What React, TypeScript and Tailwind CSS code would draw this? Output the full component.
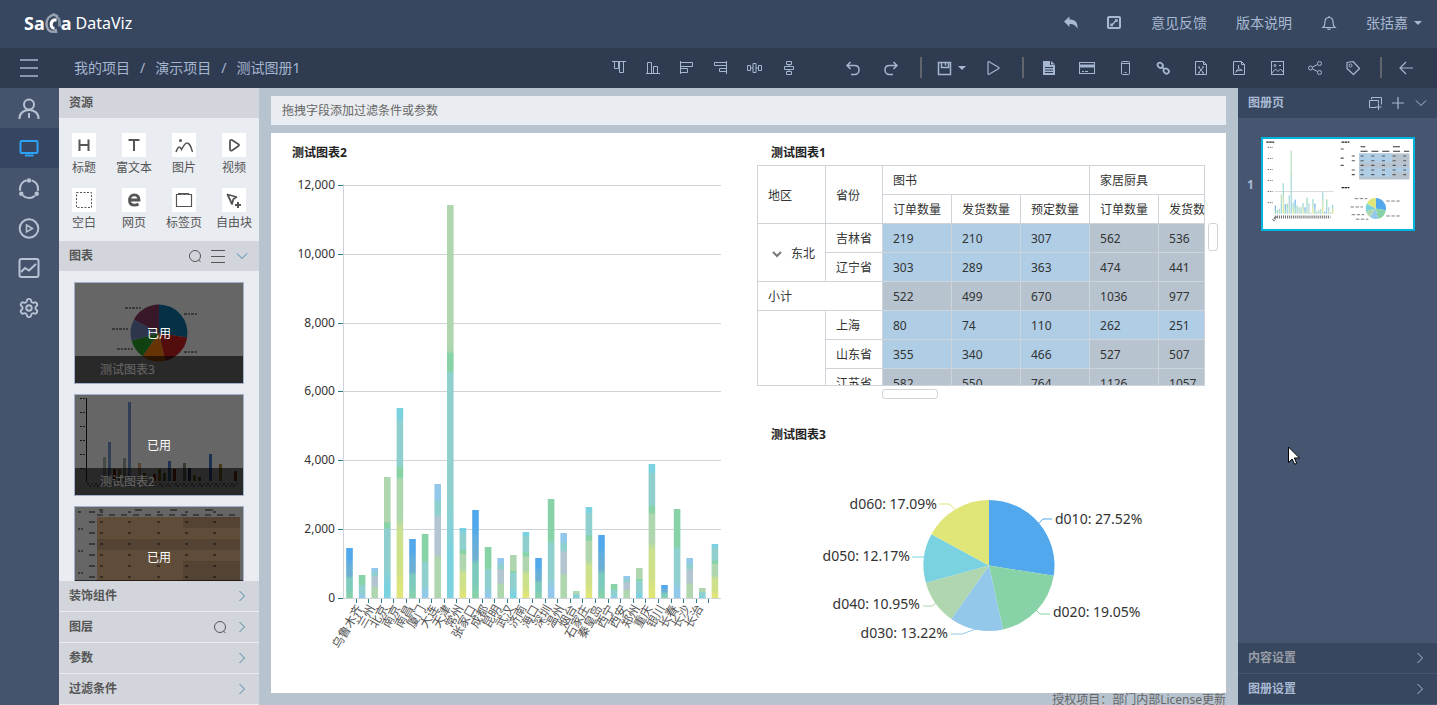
import { ReactNode } from "react";
import clsx from "clsx";
import { Settings } from "lucide-react";

const C = {
  blue: "#52a8ec",
  green: "#87d2a6",
  sky: "#93c8ea",
  sage: "#afd6ae",
  cyan: "#7ad1e0",
  lime: "#dfe577",
  teal: "#8fd0cf",
  steel: "#b3c5d0",
};

// top pixel of every bar, the base line is at 598
const barTops = [
  548, 575, 568, 477, 408, 539, 534, 484, 205, 528, 510, 547, 558, 555, 532,
  558, 499, 533, 591, 507, 535, 584, 576, 568, 464, 585, 509, 558, 588, 544,
];

const barStops: [number, string][][] = [
  [[0, C.blue], [20, C.blue], [32, "#62aede"], [55, "#6fafd0"], [62, "#7bcabc"], [80, "#7bcabc"], [100, C.green]],
  [[0, C.green], [41, C.green], [46, C.teal], [80, C.teal], [92, C.sky], [100, C.sky]],
  [[0, C.sky], [13, C.sky], [16, C.teal], [26, C.teal], [30, C.steel], [61, C.steel], [66, C.sage], [100, C.sage]],
  [[0, C.sage], [37, C.sage], [38, C.green], [42, C.green], [43, C.teal], [75, C.teal], [90, C.cyan], [100, C.cyan]],
  [[0, C.cyan], [5, C.cyan], [8, C.teal], [30, C.teal], [32, C.green], [36, C.green], [38, C.sage], [58, C.sage], [65, "#cbe18e"], [85, "#cfe187"], [96, C.lime], [100, C.lime]],
];

const cities = [
  "乌鲁木齐", "兰州", "北京", "南京", "南昌", "厦门", "大连", "天津", "常州", "张家口",
  "成都", "昆明", "武汉", "济南", "海口", "深圳", "温州", "烟台", "石家庄", "秦皇岛",
  "西宁", "西安", "郑州", "重庆", "银川", "长春", "长沙", "长治",
];

const yLabels = ["12,000", "10,000", "8,000", "6,000", "4,000", "2,000", "0"];

const pieData = [
  { name: "d010", value: 27.52, color: C.blue, x: 1055, y: 524, anchor: "start", line: "M1039 523l4-4h9" },
  { name: "d020", value: 19.05, color: C.green, x: 1053, y: 617, anchor: "start", line: "M1036 610l4 4h10" },
  { name: "d030", value: 13.22, color: C.sky, x: 948, y: 638, anchor: "end", line: "M976 629l-14 5h-11" },
  { name: "d040", value: 10.95, color: C.sage, x: 920, y: 609, anchor: "end", line: "M936 603l-4 3h-9" },
  { name: "d050", value: 12.17, color: C.cyan, x: 910, y: 561, anchor: "end", line: "M924 557h-12" },
  { name: "d060", value: 17.09, color: C.lime, x: 937, y: 509, anchor: "end", line: "M955 509l-6-5h-10" },
];

const darkPie = ["#1178b0", "#d02222", "#ff7f0e", "#2ca02c", "#7488c0", "#8c3a64"];

function Bars({ id }: { id: string }) {
  return (
    <g>
      <defs>
        {barStops.map((stops, i) => (
          <linearGradient key={i} id={id + i} x1="0" y1="0" x2="0" y2="1">
            {stops.map(([o, c], k) => (
              <stop key={k} offset={o + "%"} stopColor={c} />
            ))}
          </linearGradient>
        ))}
      </defs>
      {barTops.map((top, i) => (
        <rect key={i} x={346.2 + i * 12.6} y={top} width="6.6" height={598 - top} fill={`url(#${id}${i % 5})`} />
      ))}
    </g>
  );
}

function Slices({ cx, cy, r, colors }: { cx: number; cy: number; r: number; colors: string[] }) {
  let sum = 0;
  return (
    <g>
      {pieData.map((d, i) => {
        const a = (sum / 100) * Math.PI * 2;
        sum += d.value;
        const b = (sum / 100) * Math.PI * 2;
        return (
          <path
            key={d.name}
            fill={colors[i]}
            d={`M${cx} ${cy}L${cx + r * Math.sin(a)} ${cy - r * Math.cos(a)}A${r} ${r} 0 0 1 ${cx + r * Math.sin(b)} ${cy - r * Math.cos(b)}Z`}
          />
        );
      })}
    </g>
  );
}

function BarChart() {
  return (
    <svg viewBox="271 165 477 500" className="w-full" fontSize="12" fill="#333">
      {yLabels.map((label, i) => {
        const y = 185.5 + i * 69 - (i > 2 ? 1 : 0);
        return (
          <g key={label}>
            <path d={`M343 ${y}H721`} stroke="#cfd4db" />
            <path d={`M338 ${y}H343`} stroke="#2b7a87" />
            <text x="335" y={y + 3} textAnchor="end">{label}</text>
          </g>
        );
      })}
      <path d="M343.5 184V598" stroke="#cfd4db" />
      <Bars id="bar" />
      {Array.from({ length: 29 }, (_, i) => (
        <path key={i} d={`M${Math.round(355.6 + i * 12.6) + 0.5} 599v4`} stroke="#2b7a87" />
      ))}
      {cities.map((city, i) => (
        <text
          key={city}
          fill="#555"
          textAnchor="end"
          transform={`translate(${363 + i * 12.6} 608) rotate(-60)`}
        >
          {city}
        </text>
      ))}
    </svg>
  );
}

function PieChart() {
  return (
    <svg viewBox="748 445 478 240" className="w-full" fontSize="14" fill="#333">
      <Slices cx={989} cy={565.5} r={65.5} colors={pieData.map((d) => d.color)} />
      {pieData.map((d) => (
        <g key={d.name}>
          <path d={d.line} fill="none" stroke={d.color} />
          <text x={d.x} y={d.y} textAnchor={d.anchor as "start" | "end"}>
            {`${d.name}: ${d.value}%`}
          </text>
        </g>
      ))}
    </svg>
  );
}

const rows = [
  { area: "东北", span: 2, name: "吉林省", cells: [219, 210, 307, 562, 536], hot: 3 },
  { name: "辽宁省", cells: [303, 289, 363, 474, 441], hot: 3 },
  { total: "小计", cells: [522, 499, 670, 1036, 977], hot: 0 },
  { area: "", span: 3, name: "上海", cells: [80, 74, 110, 262, 251], hot: 5 },
  { name: "山东省", cells: [355, 340, 466, 527, 507], hot: 3 },
  { name: "江苏省", cells: [582, 550, 764, 1126, 1057], hot: 0 },
];

const cell = "h-[29px] border-r border-b border-[#cfd4db] px-[10px] pt-[2px] pb-0 text-left font-normal whitespace-nowrap";

function PivotTable() {
  return (
    <div className="h-[221px] min-w-0 flex-1 overflow-hidden border border-[#cfd4db]">
      <table className="w-[470px] table-fixed border-separate border-spacing-0">
        <colgroup>
          <col className="w-[68px]" />
          <col className="w-[57px]" />
          <col className="w-[69px]" />
          <col className="w-[69px]" />
          <col className="w-[69px]" />
          <col className="w-[69px]" />
          <col className="w-[69px]" />
        </colgroup>
        <thead>
          <tr>
            <th rowSpan={2} className={cell}>地区</th>
            <th rowSpan={2} className={cell}>省份</th>
            <th colSpan={3} className={cell}>图书</th>
            <th colSpan={2} className={cell}>家居厨具</th>
          </tr>
          <tr>
            {["订单数量", "发货数量", "预定数量", "订单数量", "发货数量"].map((h, i) => (
              <th key={i} className={cell}>{h}</th>
            ))}
          </tr>
        </thead>
        <tbody>
          {rows.map((row, r) => (
            <tr key={r}>
              {row.total && <td colSpan={2} className={cell}>{row.total}</td>}
              {row.span && (
                <td rowSpan={row.span} className={cell}>
                  {row.area && (
                    <span className="flex items-center justify-end">
                      <svg viewBox="0 0 10 8" className="mr-[9px] h-2 w-[10px]" fill="none" stroke="#777" strokeWidth="2">
                        <path d="M1 2l4 4 4-4" />
                      </svg>
                      {row.area}
                    </span>
                  )}
                </td>
              )}
              {row.name && <td className={cell}>{row.name}</td>}
              {row.cells.map((v, i) => (
                <td key={i} className={clsx(cell, i < row.hot ? "bg-[#afcde5]" : "bg-[#b7c4cf]")}>{v}</td>
              ))}
            </tr>
          ))}
        </tbody>
      </table>
    </div>
  );
}

function Ico({ s = 16, w = 1, children }: { s?: number; w?: number; children: ReactNode }) {
  return (
    <svg width={s} height={s} viewBox={`0 0 ${s} ${s}`} fill="none" stroke="currentColor" strokeWidth={w}>
      {children}
    </svg>
  );
}

const SearchIcon = () => (
  <Ico s={14}>
    <circle cx="7" cy="7" r="5.5" />
    <path d="M10.500 11L12.500 13" />
  </Ico>
);
const Chevron = () => <Ico s={12}><path d="M3.500 1L8.500 6l-5 5" /></Ico>;
const ChevronDown = () => <Ico s={12}><path d="M1 3.500l5 5 5-5" /></Ico>;
const Caret = () => (
  <svg width="8" height="4" viewBox="0 0 8 4" fill="currentColor"><path d="M0 0h8L4 4z" /></svg>
);
const Divider = ({ className }: { className: string }) => (
  <span className={clsx("h-[21px] w-[2px] bg-[#62656c]", className)} />
);

const alignTools = [
  { label: "顶部对齐", icon: <path d="M1 1.500h14M3.500 1.500v7h4v-7M8.500 1.500v11h4v-11" /> },
  { label: "底部对齐", icon: <path d="M1 13.500h14M2.500 13.500v-11h4v11M8.500 13.500v-7h4v7" /> },
  { label: "左对齐", icon: <path d="M1.500 1v13M1.500 2.500h12v4h-12M1.500 8.500h7v4h-7" /> },
  { label: "右对齐", icon: <path d="M13.500 1v13M13.500 2.500h-12v3h12M13.500 8.500h-7v3h7" /> },
  { label: "水平分布", icon: <path d="M.5 5.500h3v5h-3zM11.500 5.500h3v5h-3zM6 3.500h3v9H6zM3.500 8H6M9 8h2.500" /> },
  { label: "垂直分布", icon: <path d="M5.500 1.500h5v3h-5zM5.500 11.500h5v3h-5zM3.500 6.500h9v3h-9zM8 4.500v2M8 9.500v2" /> },
];

const pageTools = [
  {
    label: "文档",
    icon: (
      <>
        <path d="M2 1h7v4h5v10H2z" fill="currentColor" stroke="none" />
        <path d="M10 1l4 3.500h-4z" fill="currentColor" stroke="none" />
        <path d="M4 7.500h8M4 10h8M4 12.500h8" stroke="#2f3b51" />
      </>
    ),
  },
  { label: "卡片", icon: <><rect x=".5" y="2.500" width="15" height="11" /><path d="M1 6h14" strokeWidth="3" /><path d="M3 11.500h2M6 11.500h3" /></> },
  { label: "手机", icon: <><rect x="4.500" y="1.500" width="8" height="13" rx="1" /><path d="M4.500 3.500h8M7.500 12.500h2" /></> },
  { label: "链接", icon: <g strokeWidth="1.800"><rect x="2.500" y="3" width="5.500" height="4.500" rx="2" transform="rotate(45 5.200 5.200)" /><rect x="8.500" y="8.800" width="5.500" height="4.500" rx="2" transform="rotate(45 11.200 11)" /><path d="M6.500 6.500l3 3" /></g> },
  { label: "导出Excel", icon: <><path d="M2.500 1.500h8l3 3v10h-11zM10.500 1.500v3h3" /><path d="M5.500 7l5 6M10.500 7l-5 6M5 7h2M9 7h2M5 13h2M9 13h2" /></> },
  { label: "导出PDF", icon: <><path d="M2.500 1.500h8l3 3v10h-11zM10.500 1.500v3h3" /><path d="M7.500 5v3.500L4.500 12.500M7.500 8.500l4 2M5 11l6-1" /></> },
  { label: "导出图片", icon: <><rect x="2.500" y="1.500" width="12" height="13" /><path d="M3 13l3.500-4 2.500 2.500 2.500-2.500 3 3.500" /><circle cx="6" cy="5.500" r="1" /><path d="M10 5.500h2" /></> },
  { label: "分享", icon: <><circle cx="3.500" cy="8" r="2" /><circle cx="12.500" cy="3.500" r="2" /><circle cx="12.500" cy="12.500" r="2" /><path d="M5.500 7l5-2.500M5.500 9l5 2.500" /></> },
  { label: "标签", icon: <><path d="M2 2.500l6-1 6.500 7-6 6L2 8.500z" strokeWidth="1.200" strokeLinejoin="round" /><circle cx="5.500" cy="5.500" r="1.500" /></> },
];

const navItems = [
  { label: "用户", icon: <><circle cx="11" cy="7.500" r="5" /><path d="M1.500 22v-1c0-5 4.500-8 9.500-8s9.500 3 9.500 8v1M11 16v5" /></> },
  { label: "图册", icon: <><rect x="2.500" y="4" width="17" height="12" rx="1" /><path d="M7 18.500h8.500" /></>, active: true },
  {
    label: "关系",
    icon: (
      <>
        <circle cx="11" cy="12" r="9" strokeDasharray="13.500 5.350" strokeDashoffset="-2.700" transform="rotate(-90 11 12)" />
        <circle cx="11" cy="3.500" r="2.200" fill="currentColor" stroke="none" />
        <circle cx="3.300" cy="16.800" r="2.200" fill="currentColor" stroke="none" />
        <circle cx="18.700" cy="16.800" r="2.200" fill="currentColor" stroke="none" />
      </>
    ),
  },
  { label: "播放", icon: <><circle cx="11" cy="11.500" r="9.300" /><path d="M8.500 8l6 3.500-6 3.500z" strokeWidth="1.500" /></> },
  { label: "统计", icon: <><rect x="1.500" y="2" width="19" height="18" rx="2" /><path d="M3 15l4-4 4 2.500 7-6.500" /></> },
  { label: "设置", icon: <Settings size={22} strokeWidth={2} /> },
];

const resources = [
  { name: "标题", icon: <path d="M7.500 6.500v11.500M16.500 6.500v11.500M7.500 12h9" strokeWidth="2" /> },
  { name: "富文本", icon: <path d="M6.500 7h11M12 7v11" strokeWidth="2" /> },
  { name: "图片", icon: <><path d="M4 19c2-6 4-6 5.500-2.500C12 12 13 10 15 10c3 0 4 4 5.500 9" strokeWidth="1.500" /><circle cx="8.500" cy="7.500" r="1.500" fill="currentColor" stroke="none" /></> },
  { name: "视频", icon: <path d="M8 8c0-1 1-1.500 2-1l6.500 4.200c.7.500.7 1.200 0 1.700L10 17.500c-1 .5-2 0-2-1z" strokeWidth="1.800" /> },
  { name: "空白", icon: <rect x="4.500" y="4.500" width="15" height="15" strokeDasharray="2 1.500" /> },
  { name: "网页", icon: <path d="M7.500 12h9.500c0-3.500-2-5.200-4.800-5.200S7.500 9 7.500 12.200s2 5 5 5c1.700 0 3-.5 4-1.200" strokeWidth="2.800" /> },
  { name: "标签页", icon: <><path d="M4.500 6.500h2v-1h2v1h1v-1h3v1h1v-1h3v1h3v12h-15z" strokeWidth="1.200" /><path d="M6 6h3M10.500 6h2.500M14.500 6h2" strokeWidth="2" /></> },
  { name: "自由块", icon: <><path d="M5.500 6.500l9 2.500-3.200 2.200L10 16z" strokeWidth="1.800" strokeLinejoin="round" /><path d="M16 14v6M13 17h6" strokeWidth="2" /></> },
];

function PieThumb() {
  return (
    <svg viewBox="0 0 168 100" className="h-full w-full bg-white">
      <Slices cx={84} cy={50} r={28.5} colors={darkPie} />
      <path d="M50 25h16M37 46h16M42 66h16M109 31h14M109 69h14" stroke="#222" strokeDasharray="3 1 2 1" />
    </svg>
  );
}

const thumbBars = [
  [26, 24, "#b0b8b0"], [31, 39, "#7a9cd0"], [36, 12, "#a03010"], [41, 12, "#a08020"], [46, 23, "#a0b0a0"],
  [51, 79, "#7a9cd0"], [61, 18, "#d8a878"], [66, 8, "#907020"], [76, 7, "#a03010"], [81, 12, "#a08020"],
  [86, 8, "#708040"], [91, 20, "#5080c0"], [96, 12, "#a03010"], [106, 18, "#809080"], [111, 13, "#304878"],
  [116, 6, "#a08020"], [121, 4, "#708040"], [132, 27, "#4878c8"], [142, 17, "#b09030"], [157, 10, "#a04020"],
] as const;

function BarThumb() {
  return (
    <svg viewBox="0 0 168 100" className="h-full w-full bg-white">
      <path d="M11.500 3v84" stroke="#222" />
      <path d="M5 3.500h5M5 17.500h5M5 31.500h5M5 45.500h5M5 59.500h5M5 73.500h5" stroke="#333" strokeDasharray="2 1" />
      {thumbBars.map(([x, h, c]) => (
        <rect key={x} x={x + 2} y={86 - h} width="3" height={h} fill={c} />
      ))}
      <path d="M12 89h150M14 91h146" stroke="#222" strokeDasharray="2 3 1 2" />
    </svg>
  );
}

function TableThumb() {
  return (
    <svg viewBox="0 0 168 100" className="h-full w-full bg-white">
      <rect x="22" y="10" width="143" height="90" fill="#f0c090" />
      <path d="M22 37.500h143M108 15.500h57M22 60v0M108 59.500h57M108 70h57" stroke="#c8a078" strokeWidth="11" opacity=".7" />
      {[5, 15, 26, 37, 48, 59, 70].map((y, i) => (
        <g key={y} stroke="#222">
          <path d={`M14 ${y}h6M25 ${y}h3M53 ${y}h3M82 ${y}h3M110 ${y}h3M138 ${y}h3`} />
          {i % 2 === 1 && <path d={`M3 ${y + 7}h6`} strokeDasharray="2 1" />}
        </g>
      ))}
      <path d="M24 3h4M60 3h7M95 3h7M130 3h8M3 5h3" stroke="#222" />
      <path d="M22 8h140" stroke="#333" strokeDasharray="6 6" />
    </svg>
  );
}

const usedCharts = [
  { name: "测试图表3", thumb: <PieThumb /> },
  { name: "测试图表2", thumb: <BarThumb /> },
  { name: "", thumb: <TableThumb /> },
];

function PageThumb() {
  return (
    <svg viewBox="271 133 955 560" preserveAspectRatio="none" className="h-full w-full">
      <path d="M343 460H721" stroke="#d5d8dc" strokeWidth="6" />
      <Bars id="mini" />
      <path d="M292 153h50M771 153h50M771 435h50" stroke="#222" strokeWidth="8" strokeDasharray="16 3" />
      <path d="M300 185h34M300 254h34M300 323h34M300 391h34M300 460h34M300 529h34" stroke="#666" strokeWidth="6" strokeDasharray="9 6" />
      <path d="M346 618H700M336 640l20-25" stroke="#777" strokeWidth="18" strokeDasharray="7 6" />
      <rect x="883" y="223" width="321" height="162" fill="#b7c4cf" />
      <path d="M883 223h207v58H883zM883 310h321v29H883zM883 339h207v29H883z" fill="#afcde5" />
      <path d="M892 239h290M892 268h290M892 297h290M892 326h290M892 355h290M836 239h34M836 268h34M836 326h34M836 355h34M765 195h24M765 252h50M765 297h24" stroke="#555" strokeWidth="7" strokeDasharray="20 48" />
      <path d="M892 209h310M892 181h30M1098 181h50" stroke="#333" strokeWidth="7" strokeDasharray="45 24" />
      <path d="M855 504h80M828 556h80M835 604h80M862 632h80M1056 519h85M1056 612h85" stroke="#777" strokeWidth="6" strokeDasharray="22 10" />
      <Slices cx={989} cy={565.5} r={65} colors={pieData.map((d) => d.color)} />
    </svg>
  );
}

function Logo() {
  return (
    <div className="flex items-center text-white">
      <span className="text-lg leading-6 font-bold">Sa</span>
      <svg width="16" height="20" viewBox="0 0 16 20" fill="none">
        <path d="M12 5.500V3L8.500 1.500C4.500 3.500 1.500 5 1.500 11c.2 4 1.800 6.500 4.500 7.500l5 .3-.5-2.800" stroke="#97a1b0" strokeWidth="2.500" />
        <path d="M13 4.500c1.500 2.500 2 5.500 1.300 9" stroke="#7f8b9d" strokeWidth="3" />
        <path d="M11.500 7H9C6.500 8 6 9.500 6.200 12c.2 2 1 3.200 3.300 3.500" stroke="#fff" strokeWidth="3" />
      </svg>
      <span className="text-lg leading-6 font-bold">a</span>
      <span className="ml-1 text-base leading-6">DataViz</span>
    </div>
  );
}

export default function App() {
  return (
    <div className="relative flex h-screen flex-col overflow-hidden bg-[#b7c4cf] font-['Noto_Sans','Noto_Sans_CJK_SC',sans-serif] text-xs text-[#333]">
      <header className="flex h-12 shrink-0 items-center justify-between bg-[#37475f] pr-[15px] pb-[2px] pl-6 text-sm text-[#a9b9d2]">
        <Logo />
        <nav className="flex items-center">
          <button aria-label="返回" className="mr-[27px]">
            <Ico>
              <path d="M1 6.500L6.500 1.500V4.500c5 0 8.500 2 8 9.500-1.500-3.500-3.500-5-8-5V12z" fill="currentColor" stroke="none" />
            </Ico>
          </button>
          <button aria-label="编辑" className="mr-[29px]">
            <Ico w={2}>
              <rect x="2" y="2" width="12" height="11" rx="1" />
              <path d="M5.500 10.500l4.500-5M9 5h2v2M5 8.500v2h2" strokeWidth="1.500" />
            </Ico>
          </button>
          <a href="#" className="mr-[29px]">意见反馈</a>
          <a href="#" className="mr-[29px]">版本说明</a>
          <button aria-label="通知" className="mr-[29px]">
            <Ico w={1.2}>
              <path d="M2 12.500h12c-1.500-1.200-2-2.500-2-5.500 0-3-1.500-4.500-4-4.500S4 4 4 7c0 3-.5 4.300-2 5.500zM8 1v1.500M6.500 13.500c.5 1.200 2.500 1.200 3 0" />
            </Ico>
          </button>
          <button className="flex items-center gap-[6px]">张括嘉<Caret /></button>
        </nav>
      </header>

      <div className="flex h-10 shrink-0 items-center bg-[#2f3b51] pr-[15px] pb-px pl-5 text-[#a5b6d0]">
        <button aria-label="菜单">
          <Ico s={18}>
            <path d="M0 1h18M0 9h18M0 17h18" strokeWidth="1.500" />
          </Ico>
        </button>
        <nav className="ml-9 flex items-center gap-[10px] text-sm">
          <a href="#">我的项目</a>
          <span>/</span>
          <a href="#">演示项目</a>
          <span>/</span>
          <span>测试图册1</span>
        </nav>
        <div className="ml-auto flex items-center">
          {alignTools.map((t) => (
            <button key={t.label} aria-label={t.label} className="flex w-[34px] justify-center">
              <Ico>{t.icon}</Ico>
            </button>
          ))}
          <button aria-label="撤销" className="ml-7 flex w-[38px] justify-center">
            <Ico w={1.5}><path d="M5.500 2L2 5.500 5.500 9M2 5.500h7.500c3 0 4.500 2 4.500 4.500s-2 4.500-4.500 4.500H6" /></Ico>
          </button>
          <button aria-label="重做" className="flex w-[38px] justify-center">
            <Ico w={1.5}><path d="M10.500 2L14 5.500 10.500 9M14 5.500H6.500C3.500 5.500 2 7.500 2 10s2 4.500 4.500 4.500H10" /></Ico>
          </button>
          <Divider className="mx-[10px]" />
          <button aria-label="保存" className="ml-1 flex w-[38px] items-center gap-[6px]">
            <Ico><path d="M2.500 2.500h12v12h-12zM5.500 2.500v5h7v-5M9.500 3v2.500" strokeWidth="1.500" /></Ico>
            <Caret />
          </button>
          <button aria-label="预览" className="flex w-[38px] justify-center">
            <Ico w={1.2}><path d="M3 2.500c0-1 .5-1 1.500-.5l9 5.300c.7.500.7 1 0 1.400l-9 5.300c-1 .5-1.500.5-1.500-.5z" /></Ico>
          </button>
          <Divider className="mr-[6px] ml-[10px]" />
          {pageTools.map((t) => (
            <button key={t.label} aria-label={t.label} className="flex w-[38px] justify-center">
              <Ico>{t.icon}</Ico>
            </button>
          ))}
          <Divider className="mx-2" />
          <button aria-label="退出" className="flex w-8 justify-center">
            <Ico w={1.2}><path d="M8 2L2 8l6 6M2 8h13" /></Ico>
          </button>
        </div>
      </div>

      <div className="flex min-h-0 flex-1">
        <nav className="w-[59px] shrink-0 bg-[#45546c] text-[#b5c3d3]">
          {navItems.map((n) => (
            <button
              key={n.label}
              aria-label={n.label}
              className={clsx("flex h-10 w-full items-center justify-center pr-[2px]", n.active && "bg-[#364660] text-[#2ba2f3]")}
            >
              <Ico s={22} w={2}>{n.icon}</Ico>
            </button>
          ))}
        </nav>

        <aside className="flex w-[200px] shrink-0 flex-col bg-[#e9ecf1] text-[#555]">
          <h2 className="h-[30px] bg-[#d2d6dc] px-[10px] leading-[30px] font-bold">资源</h2>
          <div className="grid h-[123px] grid-cols-4 content-start gap-y-[11px] pt-[15px]">
            {resources.map((r) => (
              <button key={r.name} className="flex h-11 flex-col items-center whitespace-nowrap">
                <span className="bg-white"><Ico s={24}>{r.icon}</Ico></span>
                <span className="leading-[22px]">{r.name}</span>
              </button>
            ))}
          </div>
          <div className="flex h-[30px] items-center bg-[#d2d6dc] pr-[11px] pl-[10px]">
            <h2 className="flex-1 font-bold">图表</h2>
            <button aria-label="搜索图表" className="mr-[9px]"><SearchIcon /></button>
            <button aria-label="图表列表" className="mr-[11px]">
              <Ico s={14}><path d="M0 1.500h14M0 7.500h14M0 13.500h14" /></Ico>
            </button>
            <button aria-label="收起图表" className="text-[#3d88a8]"><ChevronDown /></button>
          </div>
          <div className="flex min-h-0 flex-1 flex-col gap-[10px] overflow-hidden px-[15px] pt-[11px]">
            {usedCharts.map((c, i) => (
              <div key={i} className="relative h-[102px] shrink-0 border border-[#a5b0c8]">
                {c.thumb}
                <div className="absolute inset-x-0 bottom-0 h-[27px] bg-black/60 pl-[25px] leading-[28px] text-white">{c.name}</div>
                <div className="absolute inset-0 flex items-center justify-center bg-black/60 pt-[2px] text-white">已用</div>
              </div>
            ))}
          </div>
          {["装饰组件", "图层", "参数", "过滤条件"].map((name) => (
            <button key={name} className="flex h-[31px] shrink-0 items-center border-b border-[#e9ecf1] bg-[#d2d6dc] pr-[11px] pl-[10px] text-left">
              <span className="flex-1 font-bold">{name}</span>
              {name === "图层" && <span className="mr-[9px]"><SearchIcon /></span>}
              <span className="text-[#4a86a0]"><Chevron /></span>
            </button>
          ))}
        </aside>

        <main className="flex min-w-0 flex-1 flex-col px-3 pt-2">
          <div className="h-[29px] shrink-0 bg-[#e9ecf0] px-[11px] leading-[30px] text-[#666]">拖拽字段添加过滤条件或参数</div>
          <div className="mt-2 grid min-h-0 flex-1 grid-cols-[minmax(0,477fr)_minmax(0,478fr)] overflow-hidden bg-white">
            <section>
              <h3 className="pt-[11px] pb-[3px] pl-[21px] leading-[18px] font-bold text-[#222]">测试图表2</h3>
              <BarChart />
            </section>
            <section>
              <h3 className="pt-[11px] pb-[3px] pl-[23px] leading-[18px] font-bold text-[#222]">测试图表1</h3>
              <div className="flex gap-[3px] pr-2 pl-[9px]">
                <PivotTable />
                <div className="mt-[58px] h-[28px] w-[10px] rounded-[3px] border border-[#cfd4db]" />
              </div>
              <div className="mt-[3px] ml-[134px] h-[10px] w-[56px] rounded-[3px] border border-[#cfd4db]" />
              <h3 className="pt-[27px] pb-px pl-[23px] leading-[18px] font-bold text-[#222]">测试图表3</h3>
              <PieChart />
            </section>
          </div>
          <footer className="h-3 shrink-0 text-right leading-[14px] text-[#666]">授权项目：部门内部License更新</footer>
        </main>

        <aside className="flex w-[199px] shrink-0 flex-col bg-[#465671] text-[#a9bad4]">
          <div className="flex h-[30px] items-center bg-[#37475f] pr-[10px] pl-[10px]">
            <h2 className="flex-1 font-bold">图册页</h2>
            <button aria-label="复制页" className="mr-[9px]">
              <Ico s={14}><path d="M3.500 3.500v-2h10v7M8 11.500H1.500v-7h9v3M10.500 8v6M7.500 11h6" /></Ico>
            </button>
            <button aria-label="新增页" className="mr-[10px]">
              <Ico s={14}><path d="M7 1v12M1 7h12" strokeWidth="1.200" /></Ico>
            </button>
            <button aria-label="收起"><ChevronDown /></button>
          </div>
          <div className="flex flex-1 items-start pt-[19px] pl-[9px]">
            <span className="w-[14px] self-start pt-[39px] leading-[18px] font-bold">1</span>
            <button aria-label="图册页1" className="h-[94px] w-[154px] border-2 border-[#00b4dd] bg-white">
              <PageThumb />
            </button>
          </div>
          <button className="flex h-[31px] items-center border-b border-[#465671] bg-[#37475f] pr-[11px] pl-[10px] font-bold">
            <span className="flex-1 text-left text-[#999ea6]">内容设置</span>
            <Chevron />
          </button>
          <button className="flex h-[31px] items-center border-b border-[#465671] bg-[#37475f] pr-[11px] pl-[10px] font-bold">
            <span className="flex-1 text-left">图册设置</span>
            <Chevron />
          </button>
        </aside>
      </div>

      {/* mouse pointer */}
      <svg className="pointer-events-none absolute top-[446px] right-[137px]" width="12" height="19" viewBox="0 0 12 19" fill="#fff" stroke="#000">
        <path d="M.5 1v15.500l3.600-3.500 2.600 5.300 2-1L6.300 12h5.200z" />
      </svg>
    </div>
  );
}
